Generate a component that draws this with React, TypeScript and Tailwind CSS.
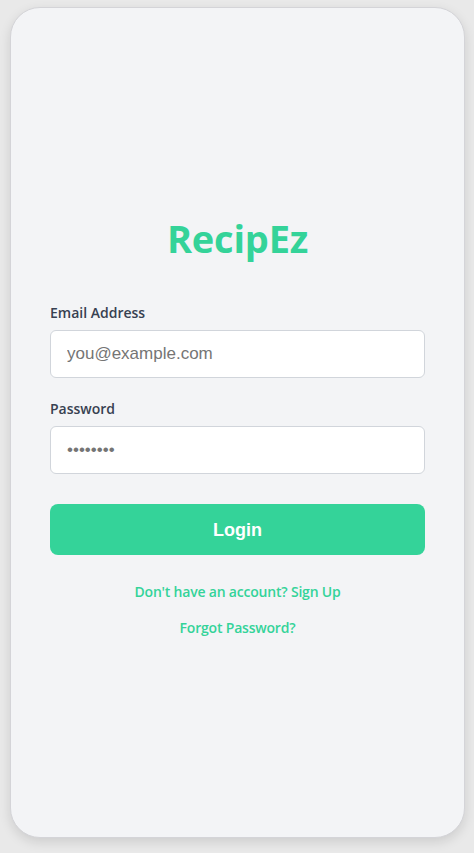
export default function App() {
  return (
    <div className="min-h-screen bg-[#e9e9e9] pl-[10px] pt-[7px]">
      <div
        className="flex h-[831px] w-[455px] flex-col rounded-[30px] border border-[#d4d4d8] bg-[#f3f4f6] px-[39px] pt-[210px] shadow-[0_4px_12px_rgba(0,0,0,0.12)]"
        style={{ fontFamily: '"Open Sans", "Noto Sans", sans-serif' }}
      >
        <h1 className="text-center text-[38px] font-bold leading-10 tracking-[-0.2px] text-[#34d399]">RecipEz</h1>

        <form className="mt-[45px] flex flex-col">
          <label className="mb-[7px] block text-sm font-semibold leading-5 text-[#374151]">Email Address</label>
          <input
            type="email"
            placeholder="you@example.com"
            className="h-12 w-full rounded-md border border-[#d1d5db] bg-white px-4 text-[17px] text-gray-800 placeholder:text-[#757575] outline-none"
            style={{ fontFamily: '"Liberation Sans", Arial, sans-serif' }}
          />

          <label className="mb-[7px] mt-[21px] block text-sm font-semibold leading-5 text-[#374151]">Password</label>
          <input
            type="password"
            placeholder="••••••••"
            className="h-12 w-full rounded-md border border-[#d1d5db] bg-white px-4 text-[17px] text-gray-800 placeholder:text-[#757575] outline-none"
            style={{ fontFamily: '"Liberation Sans", Arial, sans-serif' }}
          />

          <button
            type="button"
            className="mt-[30px] h-[51px] w-full rounded-lg bg-[#34d399] text-lg font-bold text-white"
            style={{ fontFamily: '"Liberation Sans", Arial, sans-serif' }}
          >
            Login
          </button>
        </form>

        <p className="mt-[27px] text-center text-sm font-semibold leading-5 tracking-[-0.2px] text-[#34d399]">Don't have an account? Sign Up</p>
        <p className="mt-4 text-center text-sm font-semibold leading-5 tracking-[-0.2px] text-[#34d399]">Forgot Password?</p>
      </div>
    </div>
  );
}
